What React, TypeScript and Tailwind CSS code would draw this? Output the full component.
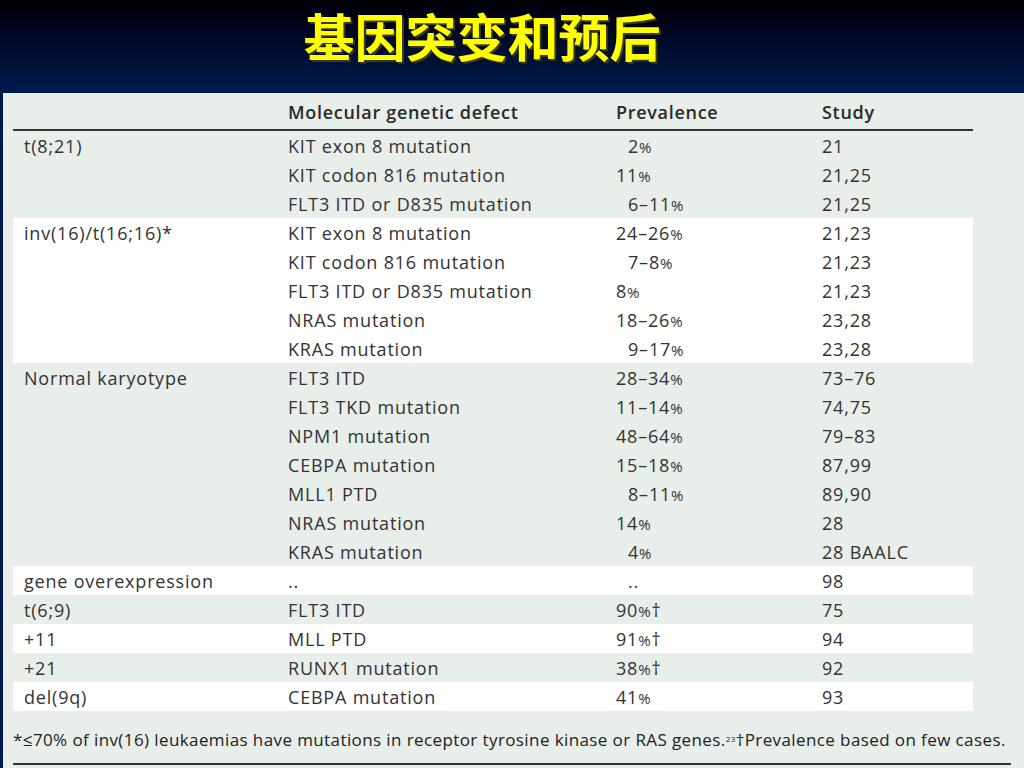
import React from "react";

type Row = { a?: string; b: string; c: string; ci?: boolean; d: string };
type Group = { white: boolean; rows: Row[] };

const groups: Group[] = [
  {
    white: false,
    rows: [
      { a: "t(8;21)", b: "KIT exon 8 mutation", c: "2%", ci: true, d: "21" },
      { b: "KIT codon 816 mutation", c: "11%", d: "21,25" },
      { b: "FLT3 ITD or D835 mutation", c: "6–11%", ci: true, d: "21,25" },
    ],
  },
  {
    white: true,
    rows: [
      { a: "inv(16)/t(16;16)*", b: "KIT exon 8 mutation", c: "24–26%", d: "21,23" },
      { b: "KIT codon 816 mutation", c: "7–8%", ci: true, d: "21,23" },
      { b: "FLT3 ITD or D835 mutation", c: "8%", d: "21,23" },
      { b: "NRAS mutation", c: "18–26%", d: "23,28" },
      { b: "KRAS mutation", c: "9–17%", ci: true, d: "23,28" },
    ],
  },
  {
    white: false,
    rows: [
      { a: "Normal karyotype", b: "FLT3 ITD", c: "28–34%", d: "73–76" },
      { b: "FLT3 TKD mutation", c: "11–14%", d: "74,75" },
      { b: "NPM1 mutation", c: "48–64%", d: "79–83" },
      { b: "CEBPA mutation", c: "15–18%", d: "87,99" },
      { b: "MLL1 PTD", c: "8–11%", ci: true, d: "89,90" },
      { b: "NRAS mutation", c: "14%", d: "28" },
      { b: "KRAS mutation", c: "4%", ci: true, d: "28 BAALC" },
    ],
  },
  { white: true, rows: [{ a: "gene overexpression", b: "..", c: "..", ci: true, d: "98" }] },
  { white: false, rows: [{ a: "t(6;9)", b: "FLT3 ITD", c: "90%†", d: "75" }] },
  { white: true, rows: [{ a: "+11", b: "MLL PTD", c: "91%†", d: "94" }] },
  { white: false, rows: [{ a: "+21", b: "RUNX1 mutation", c: "38%†", d: "92" }] },
  { white: true, rows: [{ a: "del(9q)", b: "CEBPA mutation", c: "41%", d: "93" }] },
];

function Pct({ s }: { s: string }) {
  const parts = s.split("%");
  if (parts.length === 1) return <>{s}</>;
  return (
    <>
      {parts[0]}
      <span className="text-[15px]">%</span>
      {parts[1]}
    </>
  );
}

export default function App() {
  return (
    <div
      className="w-[1024px] h-[768px] overflow-hidden bg-[#00184a] text-[#333]"
      style={{ fontFamily: '"Open Sans", "Noto Sans", sans-serif' }}
    >
      <div className="h-[93px] bg-gradient-to-b from-[#000006] via-[#000d2e] to-[#001a4e] flex justify-center items-start">
        <h1
          className="ml-[-60px] mt-[1px] px-[6px] whitespace-nowrap text-[51px] leading-[68px] font-bold text-[#ffff00] [text-shadow:2px_2px_0_#3a3a00]"
          style={{ fontFamily: '"Noto Sans CJK SC", sans-serif' }}
        >
          基因突变和预后
        </h1>
      </div>
      <div className="ml-[3px] h-[675px] bg-[#e8eee9] pl-[10px] pt-0">
        <div className="w-[960px]">
          <div className="h-[36px] grid grid-cols-[275px_328px_206px_1fr] items-center font-semibold text-[18px] tracking-[0.7px] text-[#2a2a2a] pt-[2px]">
            <div />
            <div>Molecular genetic defect</div>
            <div>Prevalence</div>
            <div>Study</div>
          </div>
          <div className="h-[2px] bg-[#333]" />
          {groups.map((g, gi) => (
            <div key={gi} className={g.white ? "bg-white" : ""}>
              {g.rows.map((r, ri) => (
                <div
                  key={ri}
                  className="h-[29px] pt-[2px] grid grid-cols-[275px_328px_206px_1fr] items-center text-[18px] tracking-[0.8px] text-[#333]"
                >
                  <div className="pl-[11px]">{r.a ?? ""}</div>
                  <div>{r.b}</div>
                  <div className={r.ci ? "pl-[12px]" : ""}>
                    <Pct s={r.c} />
                  </div>
                  <div>{r.d}</div>
                </div>
              ))}
            </div>
          ))}
        </div>
        <div className="mt-[16px] text-[17px] tracking-[0.4px] text-[#222] whitespace-nowrap">
          *≤70% of inv(16) leukaemias have mutations in receptor tyrosine kinase or RAS genes.
          <sup className="text-[8px]">23</sup>†Prevalence based on few cases.
        </div>
        <div className="mt-[10px] w-[998px] h-[2px] bg-[#333]" />
      </div>
    </div>
  );
}
